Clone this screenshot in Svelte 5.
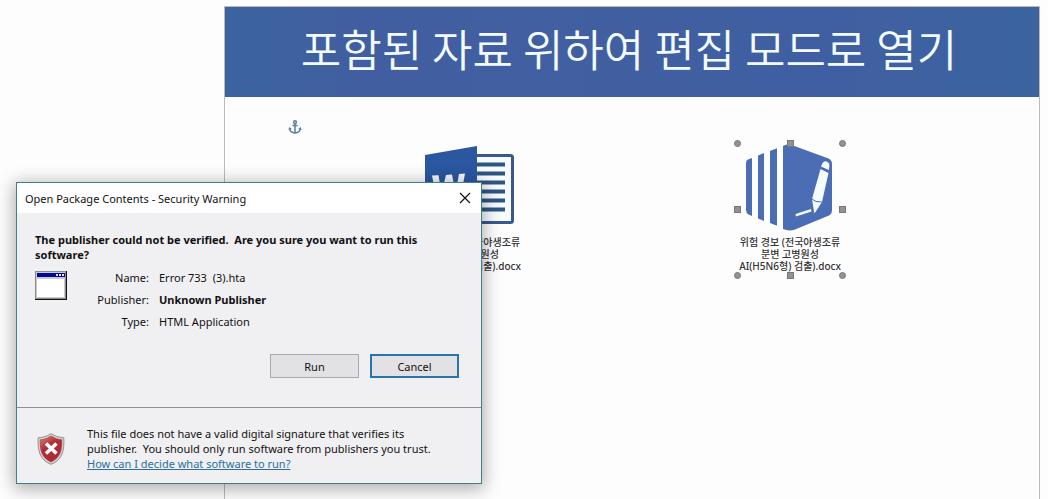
<script lang="ts">
  const details = [
    { label: 'Name:', value: 'Error 733\u00a0 (3).hta', strong: false },
    { label: 'Publisher:', value: 'Unknown Publisher', strong: true },
    { label: 'Type:', value: 'HTML Application', strong: false },
  ];
  const caption = ['위험 경보 (전국야생조류', '분변 고병원성', 'AI(H5N6형) 검출).docx'];
  const handles = ['nw', 'n', 'ne', 'w', 'e', 'sw', 's', 'se'];
</script>

<div class="workspace">
  <main class="sheet">
    <header><h1>포함된 자료 위하여 편집 모드로 열기</h1></header>
    <div class="sheet-body">
      <svg class="anchor" viewBox="0 0 14 14" aria-hidden="true">
        <g fill="none" stroke="#5b7e98" stroke-width="1.5">
          <circle cx="7" cy="2.2" r="1.4" />
          <path d="M7 3.6V12.8M4.4 5.4h5.2M1.6 8.4C2 11.2 4 12.9 7 12.9s5-1.700 5.400-4.500" />
        </g>
        <path d="M.4 9.900 1.400 7l2.400 2zM13.600 9.900 12.600 7l-2.400 2z" fill="#5b7e98" />
      </svg>

      <div class="objects">
        <figure>
          <svg class="icon" viewBox="0 0 106 92" aria-hidden="true">
            <rect x="50" y="12.500" width="45.500" height="67" rx="2" fill="#f7fbff" stroke="#39598c" stroke-width="3" />
            <path d="M60 21.500h28M60 30.500h28M60 39.500h28M60 48.500h28M60 57.500h28M60 66.500h28" stroke="#2f5583" stroke-width="4" />
            <path d="M8 12 60 3v86L8 80z" fill="#2b57a0" />
            <path d="M15 32.500l6.500-.3L24.500 50l4.500-18 6-.4L38.500 50l3.500-19 6-.5L42.500 61h-7L31.500 43 27.500 60.500h-7z" fill="#f4f9ff" />
          </svg>
          <figcaption>
            {#each caption as line}<span>{line}</span>{/each}
          </figcaption>
        </figure>

        <figure>
          <svg class="icon" viewBox="0 0 106 92" aria-hidden="true">
            <g fill="#4a6db4">
              <path d="M15 15v58l-3.500-1.500Q9 70 9 67V20q0-3 2.500-3.700z" />
              <path d="M21 12.500 27 10v68l-6-2.500zM33 8l7-2.800v77.500L33 80z" />
              <path d="M46 3q5-2.500 10-.5l35.500 13Q95 17 95 21v46q0 4-3 5.500L58 86.500q-6 2-12-.5z" />
            </g>
            <g fill="#f5fcff">
              <path d="m75 56 8.500-30 8 4-6.500 29-6.500 10-1.200 1.300z" />
              <path d="m84 23.500 1.500-3.500q3-3.500 6.500.5 1 2-.2 6.500z" />
              <path d="m58.500 71 15.500-5 .5 2.500-15.500 5z" />
            </g>
            <path d="m75 56 4 2.500 6 .5M84 25l7.500 4" fill="none" stroke="#4a6db4" stroke-width="1" />
          </svg>
          <figcaption>
            {#each caption as line}<span>{line}</span>{/each}
          </figcaption>
          {#each handles as handle}<i class="handle {handle}"></i>{/each}
        </figure>
      </div>
    </div>
  </main>

  <section class="dialog" role="dialog" aria-labelledby="dialog-title">
    <div class="titlebar">
      <h2 id="dialog-title">Open Package Contents - Security Warning</h2>
      <button class="close" aria-label="Close">
        <svg viewBox="0 0 12 12" aria-hidden="true"><path d="m1 1 10 10M11 1 1 11" stroke="#111" stroke-width="1.200" /></svg>
      </button>
    </div>

    <div class="content">
      <p class="question">The publisher could not be verified.&nbsp; Are you sure you want to run this software?</p>
      <div class="info">
        <svg class="app" viewBox="0 0 32 29" aria-hidden="true">
          <path d="M0 0h32v29H0z" fill="#111" />
          <path d="M0 0h31v28H0z" fill="#8c8c8c" />
          <path d="M1 1h29v26H1z" fill="#c9c9c9" />
          <path d="M2 2h28v4H2z" fill="#000a96" />
          <path d="M2 8h27v18H2z" fill="#fff" />
          <path d="M21 3h2v2h-2zM24 3h2v2h-2zM27 3h2v2h-2z" fill="#e4e4ee" />
        </svg>
        <dl>
          {#each details as row}
            <dt>{row.label}</dt>
            <dd class:strong={row.strong}>{row.value}</dd>
          {/each}
        </dl>
      </div>
      <div class="actions">
        <button class="btn">Run</button>
        <button class="btn primary">Cancel</button>
      </div>
    </div>

    <footer>
      <svg class="shield" viewBox="0 0 28 32" aria-hidden="true">
        <defs>
          <linearGradient id="shield-red" x1="0" y1="0" x2="0.600" y2="1">
            <stop offset="0" stop-color="#dc8583" />
            <stop offset="0.450" stop-color="#b32d35" />
            <stop offset="1" stop-color="#a92a35" />
          </linearGradient>
        </defs>
        <path d="M14 .7Q19.500 4.500 26.800 4.800C27.500 17 25.500 27 14 31.300 2.500 27 .5 17 1.200 4.800 8.500 4.500 14 .7 14 .7z" fill="#d9d5d3" stroke="#8d8381" stroke-width=".9" />
        <path d="M14 3Q19 6.300 24.800 6.800C25.200 17 23.300 25 14 29 4.700 25 2.800 17 3.200 6.800 9 6.300 14 3 14 3z" fill="url(#shield-red)" stroke="#9b4245" stroke-width=".6" />
        <path d="m9 10.500 10.500 10M19.500 10.500 9 20.500" stroke="#fff" stroke-width="3.600" />
      </svg>
      <p>
        This file does not have a valid digital signature that verifies its publisher.&nbsp; You should only run software from publishers you trust.
        <a href="#help">How can I decide what software to run?</a>
      </p>
    </footer>
  </section>
</div>

<style>
  :global(body) {
    margin: 0;
    background: #fcfcfd;
  }
  .workspace {
    position: relative;
    box-sizing: border-box;
    min-height: 100vh;
    padding: 6px 8px 0 224px;
    display: flex;
    color: #111;
    font: 11px/15px "Noto Sans", "Open Sans", "Noto Sans CJK KR", sans-serif;
    background: #fdfdfe;
  }
  h1, h2, p, dl, dd, figure {
    margin: 0;
  }
  .sheet {
    flex: 1;
    border: solid #b9bbc2;
    border-width: 1px 1px 0;
    background: #fefdfe;
  }
  header {
    display: grid;
    place-items: center;
    box-sizing: border-box;
    height: 90px;
    padding: 0 6px 8px 0;
    background: linear-gradient(90deg, #3b649f, #415fa0 15%, #405fa2 75%, #3b649f);
  }
  h1 {
    color: #f2fbff;
    font: 350 44px/64px "Noto Sans CJK KR", sans-serif;
    white-space: nowrap;
  }
  .sheet-body {
    padding: 23px 4px 0 0;
  }
  .anchor {
    display: block;
    width: 14px;
    height: 14px;
    margin-left: 63px;
  }
  .objects {
    display: grid;
    grid-template-columns: 1fr 1fr;
    justify-items: center;
    max-width: 640px;
    margin: 9px auto 0;
  }
  figure {
    position: relative;
    width: 106px;
    height: 133px;
  }
  .icon {
    display: block;
    width: 106px;
    height: 92px;
  }
  figcaption {
    display: flex;
    flex-direction: column;
    align-items: center;
    padding-top: 1px;
    font: 500 10px/12px "Noto Sans", "Noto Sans CJK KR", sans-serif;
    color: #333;
    white-space: nowrap;
  }
  .handle {
    position: absolute;
    width: 5px;
    height: 5px;
    border: 1px solid #777;
    background: #929292;
  }
  .nw, .w, .sw { left: -3px; }
  .n, .s { left: 50px; }
  .ne, .e, .se { right: -3px; }
  .nw, .n, .ne { top: -3px; }
  .w, .e { top: 63px; }
  .sw, .s, .se { bottom: -3px; }
  .nw, .ne, .sw, .se { border-radius: 50%; }

  .dialog {
    position: absolute;
    left: 16px;
    top: 182px;
    box-sizing: border-box;
    width: 466px;
    border: 1px solid #3f7f87;
    background: #f0eff1;
    box-shadow: 0 3px 16px 2px rgb(0 0 0 / 32%);
  }
  .titlebar {
    display: flex;
    align-items: center;
    justify-content: space-between;
    height: 30px;
    padding: 0 8px;
    background: #fff;
  }
  h2 {
    font-size: 11px;
    font-weight: 400;
  }
  button {
    font: inherit;
    color: inherit;
  }
  .close {
    display: flex;
    padding: 2px;
    border: 0;
    background: none;
  }
  .close svg {
    width: 12px;
    height: 12px;
  }
  .content {
    padding: 19px 22px 29px 18px;
    border-bottom: 1px solid #8b9397;
  }
  .question {
    padding-right: 20px;
    font-weight: 700;
  }
  .info {
    display: flex;
    gap: 16px;
    padding-top: 9px;
  }
  .app {
    width: 32px;
    height: 29px;
  }
  dl {
    display: grid;
    grid-template-columns: 66px auto;
    column-gap: 10px;
    line-height: 22px;
    margin-top: -4px;
  }
  dt {
    text-align: right;
  }
  .strong {
    font-weight: 700;
  }
  .actions {
    display: flex;
    justify-content: flex-end;
    gap: 11px;
    margin-top: 21px;
  }
  .btn {
    width: 89px;
    height: 24px;
    padding: 0;
    border: 1px solid #aaa8ad;
    background: #e2e1e3;
  }
  .primary {
    border: 2px solid #2b74ab;
  }
  footer {
    display: flex;
    align-items: center;
    gap: 22px;
    padding: 18px 36px 12px 20px;
  }
  .shield {
    flex: none;
    width: 28px;
    height: 32px;
  }
  a {
    display: block;
    color: #2b6f9e;
  }
</style>
